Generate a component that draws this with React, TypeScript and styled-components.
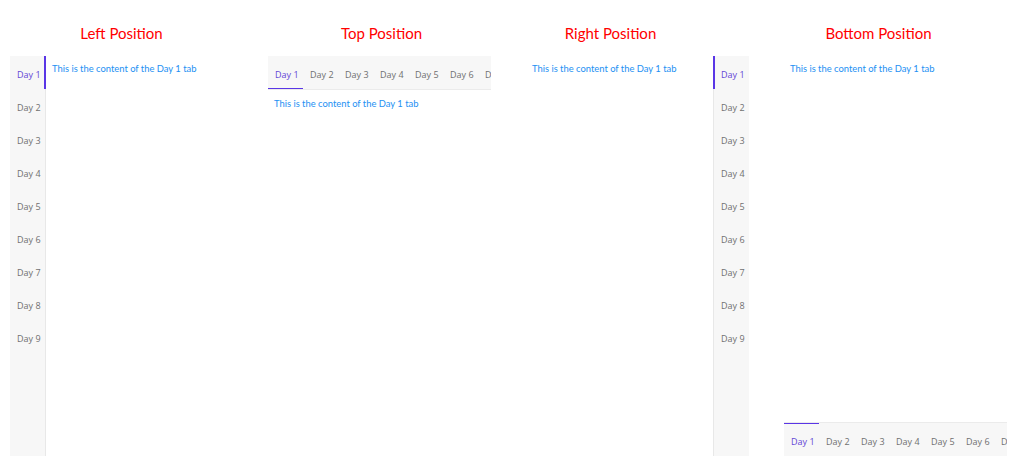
import styled, { createGlobalStyle, css } from 'styled-components';

type Side = 'left' | 'top' | 'right' | 'bottom';

const GlobalStyle = createGlobalStyle`
  html, body {
    margin: 0;
    padding: 0;
    background: #fff;
  }
  body {
    font-family: 'Open Sans', 'Noto Sans', sans-serif;
  }
`;

const Page = styled.div`
  display: grid;
  grid-template-columns: repeat(4, 223px);
  column-gap: 35px;
  padding: 0 10px;
  overflow: hidden;
  height: 457px;
`;

const Column = styled.section`
  display: flex;
  flex-direction: column;
  min-width: 0;
`;

const Heading = styled.h3<{ $shift: number }>`
  margin: 0 0 13px;
  padding-top: 23px;
  height: 20px;
  font-family: Lato, 'Open Sans', sans-serif;
  font-weight: 400;
  font-size: 15px;
  line-height: 20px;
  color: #f00;
  text-align: center;
  white-space: nowrap;
  transform: translateX(${(p) => p.$shift}px);
`;

const directions: Record<Side, string> = {
  left: 'row',
  right: 'row-reverse',
  top: 'column',
  bottom: 'column-reverse',
};

const TabsBox = styled.div<{ $side: Side }>`
  display: flex;
  flex-direction: ${(p) => directions[p.$side]};
  height: 400px;
`;

const vertical = (s: Side) => s === 'left' || s === 'right';

const TabList = styled.div<{ $side: Side }>`
  display: flex;
  flex-shrink: 0;
  background: #f7f7f7;
  ${(p) =>
    vertical(p.$side)
      ? css`
          flex-direction: column;
          width: 35px;
          ${p.$side === 'left' ? 'border-right' : 'border-left'}: 1px solid #e8e8e8;
        `
      : css`
          flex-direction: row;
          overflow: hidden;
          ${p.$side === 'top' ? 'border-bottom' : 'border-top'}: 1px solid #ebebeb;
        `}
`;

const borderEdge: Record<Side, string> = {
  left: 'right',
  right: 'left',
  top: 'bottom',
  bottom: 'top',
};

const Tab = styled.div<{ $side: Side; $active: boolean }>`
  flex-shrink: 0;
  box-sizing: border-box;
  font-size: 9px;
  line-height: 13px;
  color: ${(p) => (p.$active ? '#6445d6' : '#707070')};
  white-space: nowrap;
  cursor: pointer;
  border-${(p) => borderEdge[p.$side]}: 2px solid
    ${(p) => (p.$active ? '#5a36e6' : 'transparent')};
  ${(p) =>
    vertical(p.$side)
      ? css`
          height: 33px;
          padding: 12px 0 0 ${p.$side === 'left' ? 7 : 6}px;
          ${p.$side === 'left' ? 'margin-right: -1px;' : 'margin-left: -1px;'}
        `
      : css`
          width: 35px;
          height: 34px;
          padding: ${p.$side === 'top' ? '12px' : '11px'} 0 0 7px;
          ${p.$side === 'top' ? 'margin-bottom: -1px;' : 'margin-top: -1px;'}
        `}
`;

const Panel = styled.div<{ $side: Side }>`
  flex: 1;
  min-width: 0;
  overflow: hidden;
  padding: ${(p) => (p.$side === 'top' ? '7px' : '6px')} 6px 6px;
  font-family: Lato, 'Open Sans', sans-serif;
  font-size: 9.4px;
  line-height: 13px;
  color: #2390f3;
  white-space: nowrap;
`;

const days = Array.from({ length: 9 }, (_, i) => `Day ${i + 1}`);

const Tabs = ({ side }: { side: Side }) => (
  <TabsBox $side={side}>
    <TabList $side={side}>
      {days.map((d, i) => (
        <Tab key={d} $side={side} $active={i === 0}>
          {d}
        </Tab>
      ))}
    </TabList>
    <Panel $side={side}>This is the content of the Day 1 tab</Panel>
  </TabsBox>
);

const sections: { side: Side; title: string; shift: number }[] = [
  { side: 'left', title: 'Left Position', shift: 0 },
  { side: 'top', title: 'Top Position', shift: 2 },
  { side: 'right', title: 'Right Position', shift: -27 },
  { side: 'bottom', title: 'Bottom Position', shift: -17 },
];

export default function App() {
  return (
    <>
      <GlobalStyle />
      <Page>
        {sections.map((s) => (
          <Column key={s.side}>
            <Heading $shift={s.shift}>{s.title}</Heading>
            <Tabs side={s.side} />
          </Column>
        ))}
      </Page>
    </>
  );
}
